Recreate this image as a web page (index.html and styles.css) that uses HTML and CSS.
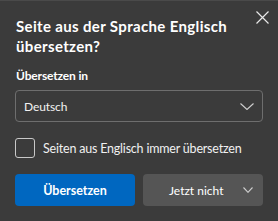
FILE: index.html
```html
<!DOCTYPE html>
<html lang="de">
<head>
<meta charset="utf-8">
<link rel="stylesheet" href="styles.css">
</head>
<body>
<div class="panel">
  <div class="head">
    <h1 class="title">Seite aus der Sprache Englisch übersetzen?</h1>
    <button class="close" aria-label="Schließen">
      <svg width="13" height="13" viewBox="0 0 13 13"><path d="M0.5 0.5L12.5 12.5M12.5 0.5L0.5 12.5" stroke="#e8e8e8" stroke-width="1.2" fill="none"/></svg>
    </button>
  </div>
  <div class="label">Übersetzen in</div>
  <div class="select">
    <span class="select-text">Deutsch</span>
    <svg width="14" height="7" viewBox="0 0 14 7"><path d="M0.5 0.5L7 6.5L13.5 0.5" stroke="#cfcfcf" stroke-width="1.1" fill="none"/></svg>
  </div>
  <label class="check">
    <span class="box"></span>
    <span class="check-text">Seiten aus Englisch immer übersetzen</span>
  </label>
  <div class="actions">
    <button class="btn primary">Übersetzen</button>
    <button class="btn secondary"><span class="btn-text">Jetzt nicht</span>
      <svg class="btn-chev" width="10" height="6" viewBox="0 0 10 6"><path d="M0.5 0.5L5 5.3L9.5 0.5" stroke="#cfcfcf" stroke-width="1.1" fill="none"/></svg>
    </button>
  </div>
</div>
</body>
</html>
```
FILE: styles.css
```css
html, body {
  margin: 0;
  padding: 0;
  background: #3b3b3b;
}
.panel {
  width: 278px;
  height: 221px;
  box-sizing: border-box;
  padding: 15px 15px 0 15px;
  background: #3b3b3b;
  border-top: 1px solid #4a4a4a;
  font-family: "Lato", "Noto Sans", sans-serif;
  color: #ffffff;
}
.head {
  display: flex;
  align-items: flex-start;
}
.title {
  margin: 0;
  font-size: 15px;
  font-weight: 700;
  line-height: 20px;
  letter-spacing: 0.35px;
  width: 230px;
  padding-left: 1px;
}
.close {
  background: none;
  border: 0;
  padding: 0;
  margin: -5px -6px 0 auto;
  width: 13px;
  height: 13px;
  display: flex;
}
.label {
  margin-top: 12px;
  padding-left: 1px;
  font-size: 12px;
  font-weight: 700;
  line-height: 16px;
  letter-spacing: -0.15px;
}
.select {
  margin-top: 6px;
  height: 32px;
  box-sizing: border-box;
  border: 1px solid #6e6e6e;
  border-radius: 4px;
  display: flex;
  align-items: center;
  justify-content: space-between;
  padding: 0 8px 0 8px;
}
.select-text {
  font-size: 12px;
  letter-spacing: -0.1px;
  color: #f2f2f2;
}
.check {
  margin-top: 16px;
  display: flex;
  align-items: center;
  gap: 8px;
  height: 20px;
}
.box {
  flex: none;
  width: 20px;
  height: 20px;
  box-sizing: border-box;
  border: 1px solid #c8c8c8;
  border-radius: 3px;
}
.check-text {
  font-size: 12.5px;
  letter-spacing: -0.2px;
  color: #f0f0f0;
  white-space: nowrap;
}
.actions {
  margin-top: 16px;
  display: flex;
  gap: 8px;
}
.btn {
  width: 120px;
  height: 32px;
  border: 0;
  border-radius: 4px;
  font-family: inherit;
  color: #ffffff;
  display: flex;
  align-items: center;
  justify-content: center;
  padding: 0;
}
.primary {
  background: #0067c0;
  font-weight: 700;
  font-size: 12.5px;
}
.secondary {
  background: #555555;
  position: relative;
  justify-content: flex-start;
  padding-left: 26px;
  font-size: 12px;
}
.btn-chev {
  position: absolute;
  right: 10px;
  top: 13px;
}
```
